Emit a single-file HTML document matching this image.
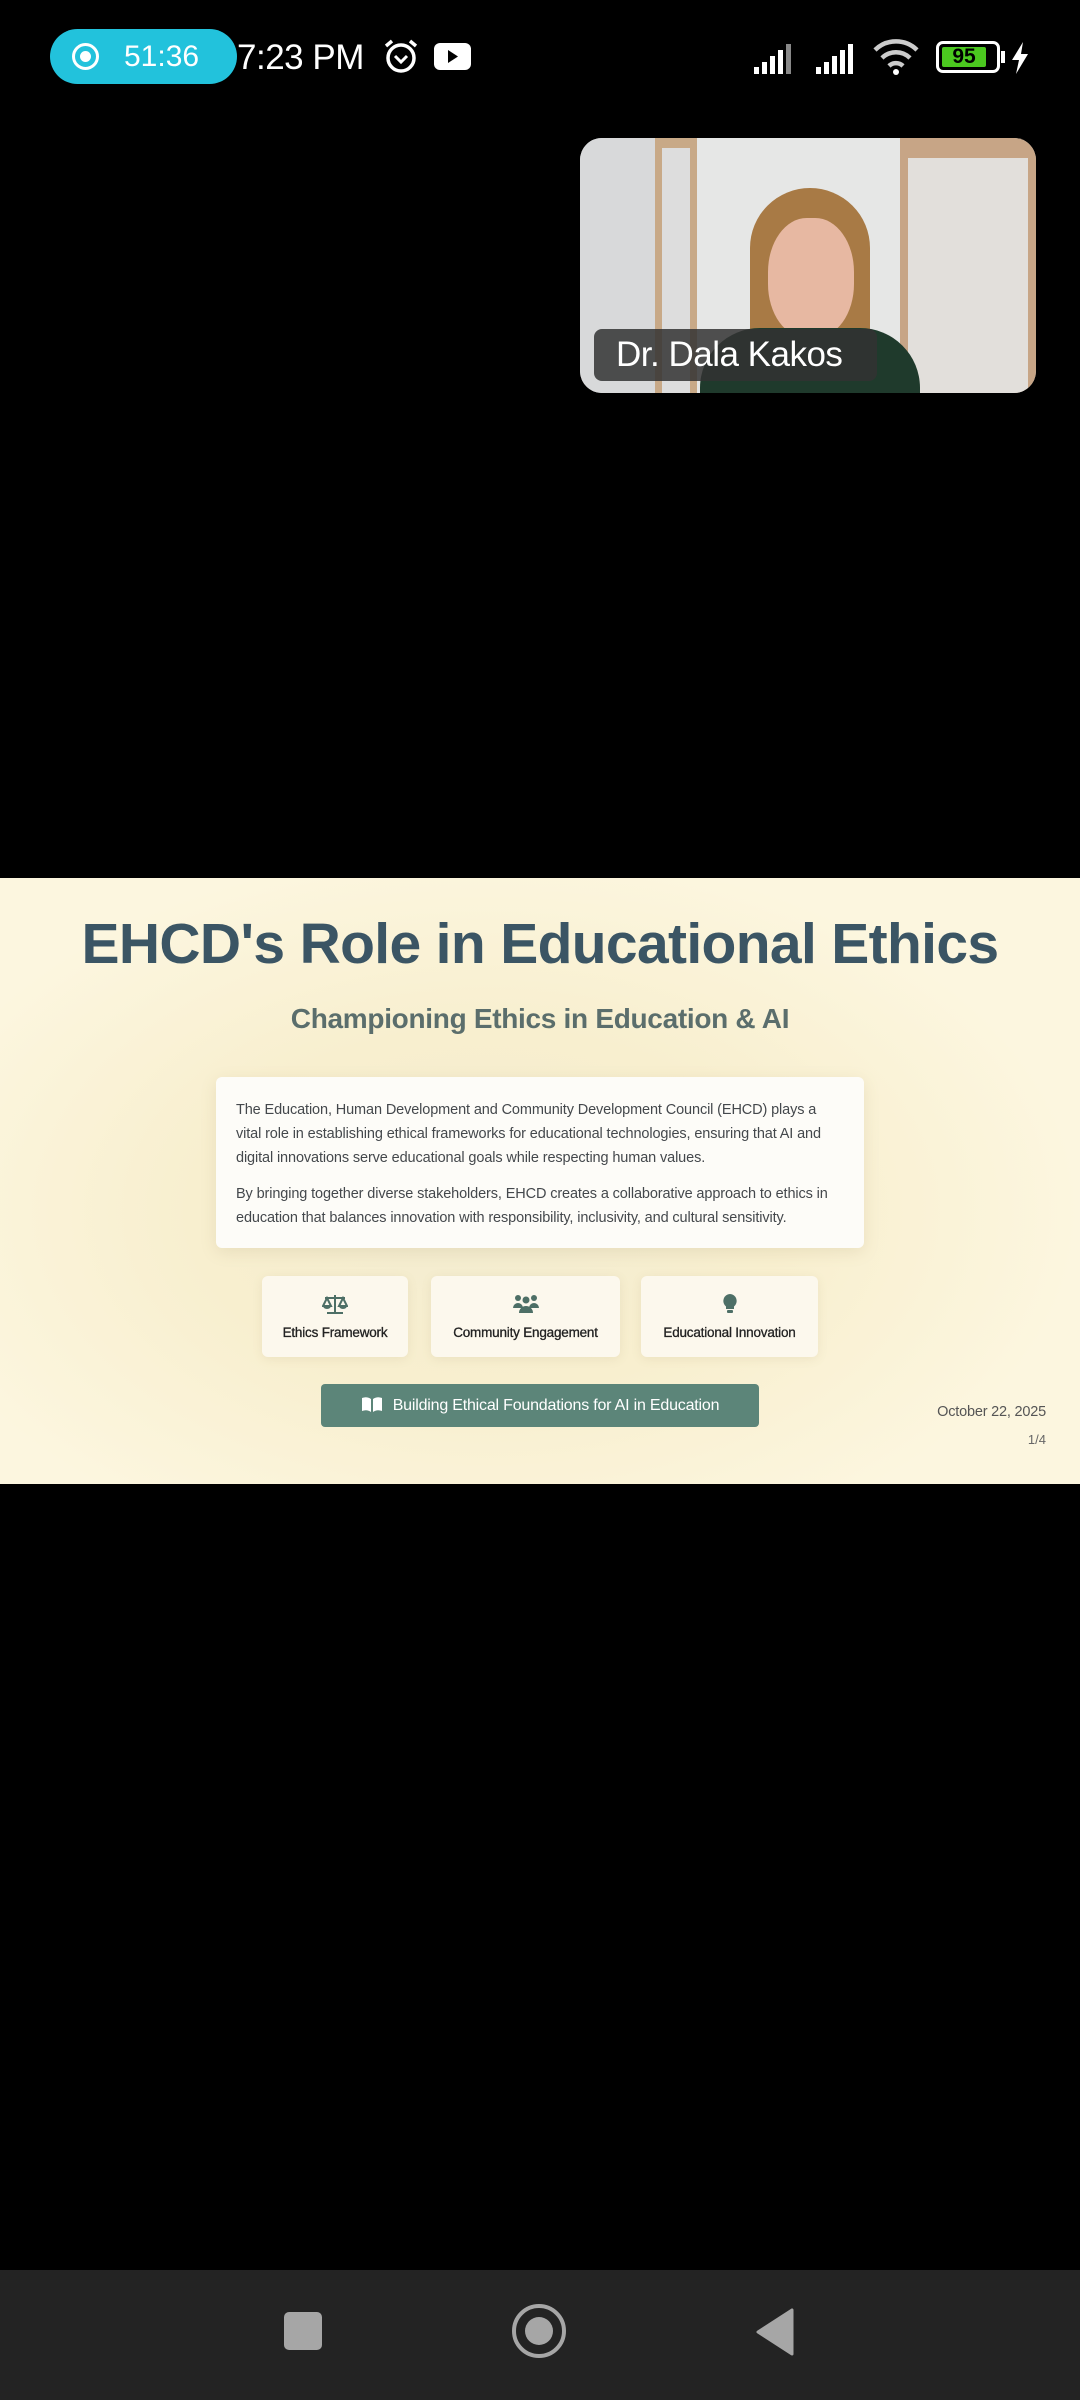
<!DOCTYPE html>
<html><head><meta charset="utf-8"><style>
*{margin:0;padding:0;box-sizing:border-box}
body{width:1080px;height:2400px;background:#000;position:relative;overflow:hidden;font-family:"Liberation Sans",sans-serif}
.abs{position:absolute}
.pill{left:50px;top:29px;width:187px;height:55px;border-radius:28px;background:#22c2dc;color:#fff;font-size:30px;line-height:55px}
.slide{left:0;top:878px;width:1080px;height:606px;background:radial-gradient(ellipse 55% 60% at 45% 55%,#f3ecd0 0%,#f8efcf 50%,#fcf6df 100%)}
.title{left:0;width:1080px;top:33px;text-align:center;font-size:57px;font-weight:bold;color:#3b5564;letter-spacing:-0.65px}
.sub{left:0;width:1080px;top:125px;text-align:center;font-size:28px;font-weight:bold;color:#5b6e6c;letter-spacing:-0.3px}
.box{left:216px;top:199px;width:648px;height:171px;background:#fdfcf8;border-radius:6px;box-shadow:0 4px 16px rgba(150,130,80,.15);padding:21px 20px;font-size:14.5px;color:#44484c;line-height:24px;letter-spacing:-0.12px}
.card{top:398px;height:81px;background:#fcf8ed;border-radius:6px;box-shadow:0 2px 10px rgba(150,130,80,.12);text-align:center;font-size:13.5px;color:#222;letter-spacing:-0.2px;-webkit-text-stroke:0.3px #222}
.card svg{display:block;margin:17px auto 10px}
.btn{left:321px;top:506px;width:438px;height:43px;background:#5c8579;border-radius:4px;color:#fff;font-size:16px;line-height:43px;text-align:center;letter-spacing:-0.2px}
.nav{left:0;top:2270px;width:1080px;height:130px;background:#232323}
</style></head><body>
<div class="abs pill"><span class="abs" style="left:22px;top:14px;width:27px;height:27px;border:3px solid #fff;border-radius:50%"></span><span class="abs" style="left:30px;top:22px;width:11px;height:11px;background:#fff;border-radius:50%"></span><span class="abs" style="left:74px;top:0">51:36</span></div>
<div class="abs" style="left:237px;top:38px;color:#fff;font-size:35px;letter-spacing:-0.5px">7:23 PM</div>
<svg class="abs" style="left:382px;top:38px" width="38" height="36" viewBox="0 0 38 36"><circle cx="19" cy="20" r="13" fill="none" stroke="#fff" stroke-width="3.5"/><path d="M4 8l6-5M34 8l-6-5" stroke="#fff" stroke-width="3.5"/><path d="M13 18l6 6 6-6" fill="none" stroke="#fff" stroke-width="3"/></svg>
<div class="abs" style="left:434px;top:43px;width:37px;height:27px;background:#fff;border-radius:6px"></div>
<svg class="abs" style="left:447px;top:49px" width="12" height="15"><path d="M1 1l10 6.5L1 14z" fill="#000"/></svg>
<svg class="abs" style="left:752px;top:41px" width="110" height="34"><g fill="#fff"><rect x="2" y="26" width="5" height="7"/><rect x="10" y="21" width="5" height="12"/><rect x="18" y="15" width="5" height="18"/><rect x="26" y="9" width="5" height="24"/><rect x="34" y="3" width="5" height="30" fill="#888"/><rect x="64" y="26" width="5" height="7"/><rect x="72" y="21" width="5" height="12"/><rect x="80" y="15" width="5" height="18"/><rect x="88" y="9" width="5" height="24"/><rect x="96" y="3" width="5" height="30"/></g></svg>
<svg class="abs" style="left:872px;top:38px" width="50" height="38"><path d="M3 12a30 30 0 0 1 42 0M10 20a20 20 0 0 1 28 0M17 28a10 10 0 0 1 14 0" fill="none" stroke="#ccc" stroke-width="4.5"/><circle cx="24" cy="34" r="3" fill="#fff"/></svg>
<div class="abs" style="left:936px;top:41px;width:64px;height:32px;border:3px solid #fff;border-radius:7px;padding:3px"><div style="width:44px;height:20px;background:#4bc81f;border-radius:2px;color:#000;font-size:21px;font-weight:bold;line-height:20px;text-align:center">95</div></div>
<div class="abs" style="left:1001px;top:51px;width:4px;height:12px;background:#fff"></div>
<svg class="abs" style="left:1010px;top:42px" width="20" height="32"><path d="M13 0L2 18h7l-3 14 12-20h-7z" fill="#fff"/></svg>

<div class="abs" style="left:580px;top:138px;width:456px;height:255px;border-radius:22px;overflow:hidden;background:#e6e7e6">
<div class="abs" style="left:0;top:0;width:80px;height:255px;background:#d8d9da"></div>
<div class="abs" style="left:75px;top:0;width:42px;height:255px;background:#c8a987"></div>
<div class="abs" style="left:82px;top:10px;width:28px;height:245px;background:#ddd"></div>
<div class="abs" style="left:320px;top:0;width:136px;height:255px;background:#c7a586"></div>
<div class="abs" style="left:328px;top:20px;width:120px;height:235px;background:#e2dfdb"></div>
<div class="abs" style="left:170px;top:50px;width:120px;height:205px;background:#a87a45;border-radius:60px 60px 0 0"></div>
<div class="abs" style="left:188px;top:80px;width:86px;height:120px;background:#e7b8a2;border-radius:45%"></div>
<div class="abs" style="left:120px;top:190px;width:220px;height:80px;background:#1f3a2c;border-radius:60px 60px 0 0"></div>
<div class="abs" style="left:14px;top:191px;width:283px;height:52px;background:rgba(50,50,50,.85);border-radius:8px;color:#fff;font-size:35px;line-height:52px;padding-left:22px;letter-spacing:-0.5px">Dr. Dala Kakos</div>
</div>

<div class="abs slide">
<div class="abs title">EHCD's Role in Educational Ethics</div>
<div class="abs sub">Championing Ethics in Education &amp; AI</div>
<div class="abs box"><p>The Education, Human Development and Community Development Council (EHCD) plays a vital role in establishing ethical frameworks for educational technologies, ensuring that AI and digital innovations serve educational goals while respecting human values.</p><p style="margin-top:12px">By bringing together diverse stakeholders, EHCD creates a collaborative approach to ethics in education that balances innovation with responsibility, inclusivity, and cultural sensitivity.</p></div>
<div class="abs card" style="left:262px;width:146px"><svg width="26" height="22" viewBox="0 0 26 22"><path d="M13 2v18M5 20h16M3 5h20M5 5l-4 8h8zM21 5l-4 8h8z" fill="none" stroke="#4d6f66" stroke-width="2"/><path d="M1 13a4 3 0 0 0 8 0zM17 13a4 3 0 0 0 8 0z" fill="#4d6f66"/></svg>Ethics Framework</div>
<div class="abs card" style="left:431px;width:189px"><svg width="26" height="22" viewBox="0 0 26 22"><g fill="#4d6f66"><circle cx="5" cy="5" r="3"/><circle cx="21" cy="5" r="3"/><circle cx="13" cy="7" r="3.5"/><path d="M0 15a5 5 0 0 1 10 0zM16 15a5 5 0 0 1 10 0zM6 20a7 7 0 0 1 14 0z"/></g></svg>Community Engagement</div>
<div class="abs card" style="left:641px;width:177px"><svg width="18" height="22" viewBox="0 0 18 22"><path d="M9 1a7 7 0 0 0-4 12.5V16h8v-2.5A7 7 0 0 0 9 1z" fill="#4d6f66"/><rect x="6" y="17" width="6" height="3" rx="1" fill="#4d6f66"/></svg>Educational Innovation</div>
<div class="abs btn"><svg style="vertical-align:-3px;margin-right:10px" width="22" height="17" viewBox="0 0 22 17"><path d="M1 2q5-2 9 1v13q-4-3-9-1zM21 2q-5-2-9 1v13q4-3 9-1z" fill="#fff"/></svg>Building Ethical Foundations for AI in Education</div>
<div class="abs" style="right:34px;top:526px;font-size:14.5px;color:#555;letter-spacing:-0.2px">October 22, 2025</div>
<div class="abs" style="right:34px;top:554px;font-size:13px;color:#666">1/4</div>
</div>

<div class="abs nav">
<div class="abs" style="left:284px;top:42px;width:38px;height:38px;background:#a6a6a6;border-radius:5px"></div>
<div class="abs" style="left:512px;top:34px;width:54px;height:54px;border:4px solid #a6a6a6;border-radius:50%"></div>
<div class="abs" style="left:525px;top:47px;width:28px;height:28px;background:#a6a6a6;border-radius:50%"></div>
<svg class="abs" style="left:754px;top:38px" width="40" height="48"><path d="M38 2v44L4 24z" fill="#a6a6a6" stroke="#a6a6a6" stroke-width="3" stroke-linejoin="round"/></svg>
</div>
</body></html>
